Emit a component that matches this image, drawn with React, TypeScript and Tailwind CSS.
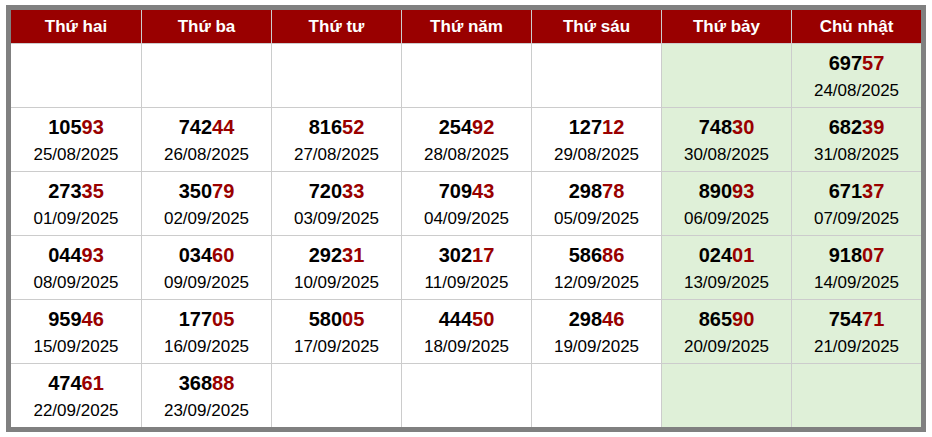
const days = ["Thứ hai", "Thứ ba", "Thứ tư", "Thứ năm", "Thứ sáu", "Thứ bảy", "Chủ nhật"];

type Cell = { num: string; date: string } | null;

const rows: Cell[][] = [
  [null, null, null, null, null, null, { num: "69757", date: "24/08/2025" }],
  [
    { num: "10593", date: "25/08/2025" },
    { num: "74244", date: "26/08/2025" },
    { num: "81652", date: "27/08/2025" },
    { num: "25492", date: "28/08/2025" },
    { num: "12712", date: "29/08/2025" },
    { num: "74830", date: "30/08/2025" },
    { num: "68239", date: "31/08/2025" },
  ],
  [
    { num: "27335", date: "01/09/2025" },
    { num: "35079", date: "02/09/2025" },
    { num: "72033", date: "03/09/2025" },
    { num: "70943", date: "04/09/2025" },
    { num: "29878", date: "05/09/2025" },
    { num: "89093", date: "06/09/2025" },
    { num: "67137", date: "07/09/2025" },
  ],
  [
    { num: "04493", date: "08/09/2025" },
    { num: "03460", date: "09/09/2025" },
    { num: "29231", date: "10/09/2025" },
    { num: "30217", date: "11/09/2025" },
    { num: "58686", date: "12/09/2025" },
    { num: "02401", date: "13/09/2025" },
    { num: "91807", date: "14/09/2025" },
  ],
  [
    { num: "95946", date: "15/09/2025" },
    { num: "17705", date: "16/09/2025" },
    { num: "58005", date: "17/09/2025" },
    { num: "44450", date: "18/09/2025" },
    { num: "29846", date: "19/09/2025" },
    { num: "86590", date: "20/09/2025" },
    { num: "75471", date: "21/09/2025" },
  ],
  [
    { num: "47461", date: "22/09/2025" },
    { num: "36888", date: "23/09/2025" },
    null,
    null,
    null,
    null,
    null,
  ],
];

const App = () => {
  return (
    <div className="w-[932px] h-[437px] bg-white pt-[5px] font-['Liberation_Sans',Arial,sans-serif]">
      <div className="mx-auto w-[920px] border-[5px] border-[#808080] bg-[#cccccc]">
        <div className="grid grid-cols-[130px_repeat(6,129px)] gap-px">
          {days.map((d) => (
            <div
              key={d}
              className="h-[33px] bg-[#990000] text-white font-bold text-[17px] flex items-center justify-center"
            >
              {d}
            </div>
          ))}
          {rows.map((row, ri) =>
            row.map((cell, ci) => (
              <div
                key={`${ri}-${ci}`}
                className={`h-[63px] flex flex-col items-center pt-[6px] text-black ${ci >= 5 ? "bg-[#dff0d8]" : "bg-white"}`}
              >
                {cell && (
                  <>
                    <div className="text-[20px] font-bold leading-[27px]">
                      {cell.num.slice(0, 3)}
                      <span className="text-[#990000]">{cell.num.slice(3)}</span>
                    </div>
                    <div className="text-[17px] leading-[27px]">{cell.date}</div>
                  </>
                )}
              </div>
            ))
          )}
        </div>
      </div>
    </div>
  );
};

export default App;
